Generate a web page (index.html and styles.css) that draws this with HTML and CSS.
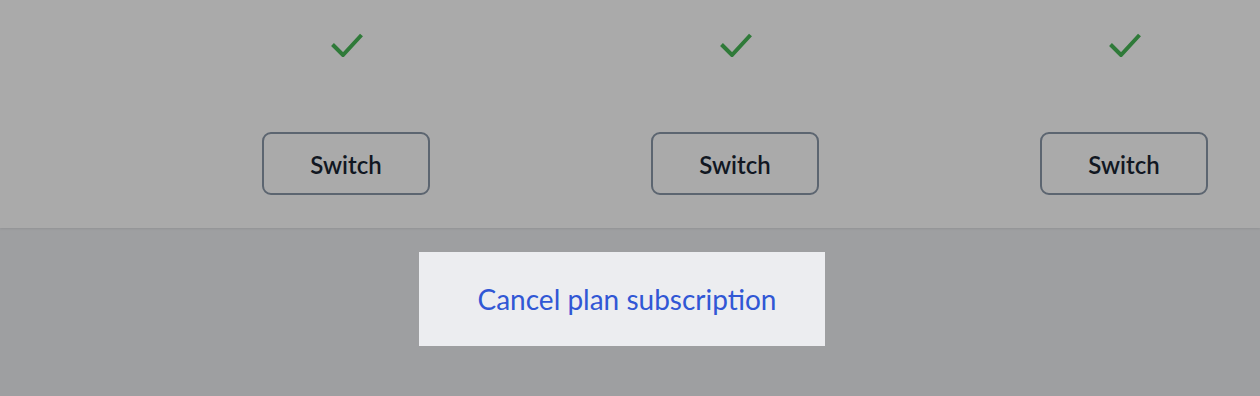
FILE: index.html
```html
<!DOCTYPE html>
<html>
<head>
<meta charset="utf-8">
<link rel="stylesheet" href="styles.css">
</head>
<body>
<section class="plans">
  <div class="plan">
    <svg class="check" width="32" height="24" viewBox="0 0 32 24"><path d="M1.5 11.5 L12 22 L30.5 2" fill="none" stroke="#2f7a39" stroke-width="4"/></svg>
    <button class="switch">Switch</button>
  </div>
  <div class="plan">
    <svg class="check" width="32" height="24" viewBox="0 0 32 24"><path d="M1.5 11.5 L12 22 L30.5 2" fill="none" stroke="#2f7a39" stroke-width="4"/></svg>
    <button class="switch">Switch</button>
  </div>
  <div class="plan">
    <svg class="check" width="32" height="24" viewBox="0 0 32 24"><path d="M1.5 11.5 L12 22 L30.5 2" fill="none" stroke="#2f7a39" stroke-width="4"/></svg>
    <button class="switch">Switch</button>
  </div>
</section>
<footer class="footer">
  <div class="cancel-box"><a class="cancel" href="#">Cancel plan subscription</a></div>
</footer>
</body>
</html>
```
FILE: styles.css
```css
html, body {
  margin: 0;
  padding: 0;
}
body {
  width: 1260px;
  height: 396px;
  overflow: hidden;
  background: #9e9fa1;
  font-family: Lato, "Noto Sans", sans-serif;
}
.plans {
  height: 228px;
  background: #aaaaaa;
  display: grid;
  grid-template-columns: repeat(3, 200px);
  column-gap: 189px;
  padding-left: 246px;
  box-sizing: border-box;
  box-shadow: 0 1px 2px rgba(0,0,0,0.08);
  position: relative;
}
.plan {
  display: flex;
  flex-direction: column;
  align-items: center;
  padding-top: 33px;
}
.check {
  display: block;
  margin-left: 1px;
}
.switch {
  margin-top: 75px;
  width: 168px;
  height: 63px;
  border: 2px solid #5c6570;
  border-radius: 9px;
  background: transparent;
  font-family: Lato, "Noto Sans", sans-serif;
  font-size: 24px;
  font-weight: 600;
  color: #111722;
  padding: 2px 0 0;
}
.footer {
  display: flex;
  justify-content: flex-start;
  padding-top: 24px;
  padding-left: 419px;
}
.cancel-box {
  width: 406px;
  height: 94px;
  background: #ecedf0;
  display: flex;
  align-items: center;
  justify-content: center;
  padding-left: 10px;
  box-sizing: border-box;
}
.cancel {
  color: #3157d5;
  font-size: 28px;
  text-decoration: none;
}
```
